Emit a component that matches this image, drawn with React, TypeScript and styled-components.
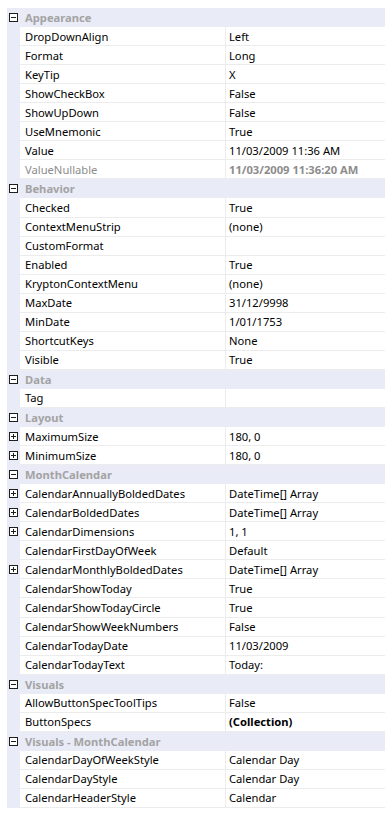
import React from "react";
import styled, { createGlobalStyle } from "styled-components";

const GlobalStyle = createGlobalStyle`
  html, body {
    margin: 0;
    padding: 0;
    background: #ffffff;
  }
  body {
    font-family: "Noto Sans", "Open Sans", sans-serif;
    font-size: 11.2px;
    color: #000;
  }
`;

type Prop = {
  name: string;
  value: string;
  expandable?: boolean;
  dim?: boolean;
  bold?: boolean;
};

type Category = {
  title: string;
  props: Prop[];
};

const categories: Category[] = [
  {
    title: "Appearance",
    props: [
      { name: "DropDownAlign", value: "Left" },
      { name: "Format", value: "Long" },
      { name: "KeyTip", value: "X" },
      { name: "ShowCheckBox", value: "False" },
      { name: "ShowUpDown", value: "False" },
      { name: "UseMnemonic", value: "True" },
      { name: "Value", value: "11/03/2009 11:36 AM" },
      { name: "ValueNullable", value: "11/03/2009 11:36:20 AM", dim: true, bold: true },
    ],
  },
  {
    title: "Behavior",
    props: [
      { name: "Checked", value: "True" },
      { name: "ContextMenuStrip", value: "(none)" },
      { name: "CustomFormat", value: "" },
      { name: "Enabled", value: "True" },
      { name: "KryptonContextMenu", value: "(none)" },
      { name: "MaxDate", value: "31/12/9998" },
      { name: "MinDate", value: "1/01/1753" },
      { name: "ShortcutKeys", value: "None" },
      { name: "Visible", value: "True" },
    ],
  },
  {
    title: "Data",
    props: [{ name: "Tag", value: "" }],
  },
  {
    title: "Layout",
    props: [
      { name: "MaximumSize", value: "180, 0", expandable: true },
      { name: "MinimumSize", value: "180, 0", expandable: true },
    ],
  },
  {
    title: "MonthCalendar",
    props: [
      { name: "CalendarAnnuallyBoldedDates", value: "DateTime[] Array", expandable: true },
      { name: "CalendarBoldedDates", value: "DateTime[] Array", expandable: true },
      { name: "CalendarDimensions", value: "1, 1", expandable: true },
      { name: "CalendarFirstDayOfWeek", value: "Default" },
      { name: "CalendarMonthlyBoldedDates", value: "DateTime[] Array", expandable: true },
      { name: "CalendarShowToday", value: "True" },
      { name: "CalendarShowTodayCircle", value: "True" },
      { name: "CalendarShowWeekNumbers", value: "False" },
      { name: "CalendarTodayDate", value: "11/03/2009" },
      { name: "CalendarTodayText", value: "Today:" },
    ],
  },
  {
    title: "Visuals",
    props: [
      { name: "AllowButtonSpecToolTips", value: "False" },
      { name: "ButtonSpecs", value: "(Collection)", bold: true },
    ],
  },
  {
    title: "Visuals - MonthCalendar",
    props: [
      { name: "CalendarDayOfWeekStyle", value: "Calendar Day" },
      { name: "CalendarDayStyle", value: "Calendar Day" },
      { name: "CalendarHeaderStyle", value: "Calendar" },
    ],
  },
];

function ExpandBox({ open }: { open: boolean }) {
  return (
    <svg width="9" height="9" viewBox="0 0 9 9">
      <rect x="0.5" y="0.5" width="8" height="8" fill="#fff" stroke="#1e1e1e" />
      <line x1="2" y1="4.5" x2="7" y2="4.5" stroke="#1e1e1e" />
      {!open && <line x1="4.5" y1="2" x2="4.5" y2="7" stroke="#1e1e1e" />}
    </svg>
  );
}

function PropertyGrid() {
  return (
    <Grid>
      {categories.map((cat) => (
        <React.Fragment key={cat.title}>
          <CategoryRow>
            <Margin>
              <ExpandBox open />
            </Margin>
            <CategoryTitle>{cat.title}</CategoryTitle>
          </CategoryRow>
          {cat.props.map((p) => (
            <PropRow key={p.name}>
              <Margin>{p.expandable ? <ExpandBox open={false} /> : null}</Margin>
              <NameCell $dim={p.dim}>{p.name}</NameCell>
              <ValueCell $dim={p.dim} $bold={p.bold}>
                {p.value}
              </ValueCell>
            </PropRow>
          ))}
        </React.Fragment>
      ))}
    </Grid>
  );
}

export default function App() {
  return (
    <>
      <GlobalStyle />
      <Page>
        <PropertyGrid />
      </Page>
    </>
  );
}

const Page = styled.div`
  padding: 8px 7px 0 7px;
`;

const Grid = styled.div`
  width: 378px;
  display: flex;
  flex-direction: column;
`;

const CategoryRow = styled.div`
  height: 19.05px;
  display: flex;
  align-items: center;
  background-color: #e9ebf7;
`;

const Margin = styled.div`
  width: 13px;
  height: 100%;
  flex-shrink: 0;
  display: flex;
  align-items: center;
  padding-left: 2px;
  box-sizing: border-box;
  background-color: #e9ebf7;
`;

const CategoryTitle = styled.div`
  padding-left: 5px;
  font-weight: bold;
  color: #a3a3a3;
  white-space: nowrap;
`;

const PropRow = styled.div`
  height: 19.05px;
  display: flex;
  align-items: stretch;
`;

const NameCell = styled.div<{ $dim?: boolean }>`
  width: 205px;
  flex-shrink: 0;
  padding-left: 5px;
  box-sizing: border-box;
  display: flex;
  align-items: center;
  border-bottom: 1px solid #ececec;
  color: ${(p) => (p.$dim ? "#8c8c8c" : "#000")};
  white-space: nowrap;
  overflow: hidden;
`;

const ValueCell = styled.div<{ $dim?: boolean; $bold?: boolean }>`
  flex: 1;
  padding-left: 3px;
  display: flex;
  align-items: center;
  border-left: 1px solid #ececec;
  border-bottom: 1px solid #ececec;
  color: ${(p) => (p.$dim ? "#8c8c8c" : "#000")};
  font-weight: ${(p) => (p.$bold ? "bold" : "normal")};
  white-space: nowrap;
  overflow: hidden;
`;
